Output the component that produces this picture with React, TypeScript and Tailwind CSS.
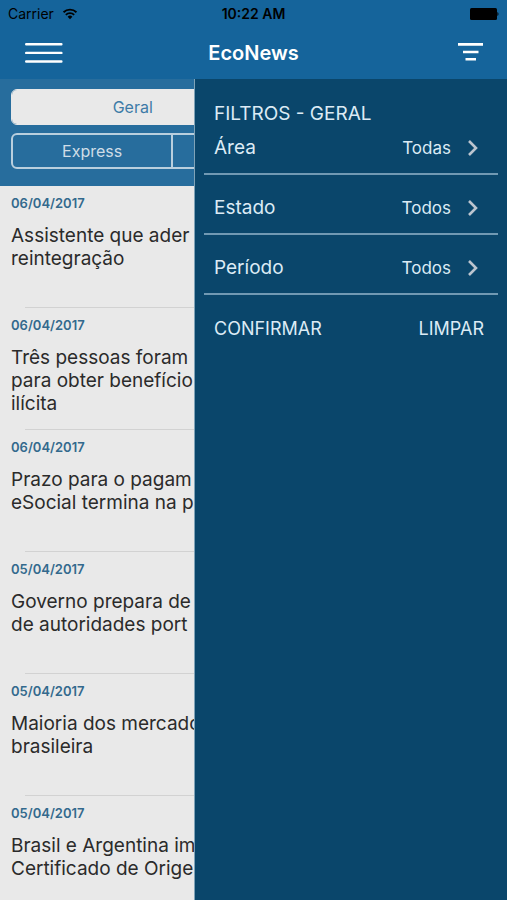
import { useState } from 'react';

interface NewsItem {
  id: number;
  date: string;
  lines: string[];
}

interface Filter {
  label: string;
  value: string;
}

const news: NewsItem[] = [
  { id: 1, date: '06/04/2017', lines: ['Assistente que ader', 'reintegração'] },
  { id: 2, date: '06/04/2017', lines: ['Três pessoas foram', 'para obter benefício', 'ilícita'] },
  { id: 3, date: '06/04/2017', lines: ['Prazo para o pagam', 'eSocial termina na p'] },
  { id: 4, date: '05/04/2017', lines: ['Governo prepara de', 'de autoridades port'] },
  { id: 5, date: '05/04/2017', lines: ['Maioria dos mercado', 'brasileira'] },
  { id: 6, date: '05/04/2017', lines: ['Brasil e Argentina im', 'Certificado de Orige'] },
];

const filters: Filter[] = [
  { label: 'Área', value: 'Todas' },
  { label: 'Estado', value: 'Todos' },
  { label: 'Período', value: 'Todos' },
];

function StatusBar() {
  return (
    <div className="grid h-7 grid-cols-3 items-center px-2 text-sm text-black">
      <div className="flex items-center gap-2">
        <span>Carrier</span>
        <svg width="16" height="12" viewBox="0 0 17 13" fill="none" stroke="currentColor" strokeWidth="2">
          <path d="M1.5 4.6a10 10 0 0 1 14 0" />
          <path d="M4 7.4a6.4 6.4 0 0 1 9 0" />
          <path d="M8.5 12.2 5.9 9.4a3.8 3.8 0 0 1 5.2 0z" fill="currentColor" stroke="none" />
        </svg>
      </div>
      <span className="text-center font-semibold">10:22 AM</span>
      <svg className="justify-self-end" width="30" height="12" viewBox="0 0 30 12" fill="currentColor">
        <rect x="1" width="27" height="12" rx="1.5" />
        <path d="M28.4 4a2.4 2.4 0 0 1 0 4z" />
      </svg>
    </div>
  );
}

function NavBar({ onToggle }: { onToggle: () => void }) {
  return (
    <div className="flex h-[51px] items-center justify-between px-6 pb-[2px]">
      <button type="button" aria-label="Menu" className="w-12 text-white">
        <svg width="40" height="22" viewBox="0 0 40 22" stroke="currentColor" strokeWidth="2.4" strokeLinecap="round">
          <path d="M2.2 2.2h35.2M2.2 10.9h35.2M2.2 19.5h35.2" />
        </svg>
      </button>
      <h1 className="text-xl font-semibold text-white">EcoNews</h1>
      <button type="button" aria-label="Filtros" onClick={onToggle} className="flex w-12 justify-end text-white">
        <svg width="25" height="20" viewBox="0 0 25 20" stroke="currentColor" strokeWidth="2.6">
          <path d="M0 1.4h25M5 9h15.5M7.5 16.2h10.5" />
        </svg>
      </button>
    </div>
  );
}

function Segments() {
  return (
    <div className="flex flex-col gap-2 bg-[#276d9d] px-[11px] pt-[10px] pb-[17px] text-base">
      <div className="grid h-9 grid-cols-2 overflow-hidden rounded-md border border-[#e9e9e9]">
        <button type="button" className="bg-[#e9e9e9] text-[#3d7ba7]">Geral</button>
        <div />
      </div>
      <div className="grid h-9 grid-cols-3 divide-x-2 divide-[#b9cfde] overflow-hidden rounded-md border-2 border-[#b9cfde]">
        <button type="button" className="text-[#cfdde7]">Express</button>
        <div />
        <div />
      </div>
    </div>
  );
}

function NewsList() {
  return (
    <ul>
      {news.map((item) => (
        <li key={item.id}>
          <article className="h-[121px] px-[11px] pt-2">
            <time className="block text-[13px] leading-[18px] font-semibold text-[#33698d]">{item.date}</time>
            <h2 className="pt-3 text-[19px] leading-[23px] whitespace-nowrap text-[#2b2b2b]">
              {item.lines.map((line) => (
                <span key={line} className="block">{line}</span>
              ))}
            </h2>
          </article>
          <hr className="ml-[25px] border-[#d2d2d2]" />
        </li>
      ))}
    </ul>
  );
}

function FilterDrawer() {
  return (
    <aside className="absolute inset-y-0 right-0 w-[313px] border-l border-[#7fa3b8] bg-[#0a466b] px-[9px] pt-[23px] text-[#dcebf5]">
      <h2 className="px-[10px] text-[19px] leading-6">FILTROS - GERAL</h2>
      {filters.map((filter, i) => (
        <button
          key={filter.label}
          type="button"
          className={`flex w-full items-end border-b-2 border-[#7199b3] px-[10px] pb-[14px] leading-[22px] ${i === 0 ? 'h-[49px]' : 'h-[60px]'}`}
        >
          <span className="flex-1 text-left text-[19px]">{filter.label}</span>
          <span className="text-[17px]">{filter.value}</span>
          <svg
            className="mr-2 ml-4 h-[22px] text-[#bcc5cf]"
            width="13"
            height="18"
            viewBox="0 0 13 18"
            fill="none"
            stroke="currentColor"
            strokeWidth="2.6"
          >
            <path d="m2 2 7 7-7 7" />
          </svg>
        </button>
      ))}
      <div className="flex justify-between px-[10px] pt-[22px] pr-[14px] text-lg leading-6">
        <button type="button">CONFIRMAR</button>
        <button type="button">LIMPAR</button>
      </div>
    </aside>
  );
}

export default function App() {
  const [open, setOpen] = useState(true);

  return (
    <div className="flex h-screen flex-col overflow-hidden bg-[#e9e9e9] font-['Inter','Liberation_Sans',sans-serif]">
      <header className="bg-[#15649b]">
        <StatusBar />
        <NavBar onToggle={() => setOpen(!open)} />
      </header>
      <main className="relative flex-1 overflow-hidden">
        <Segments />
        <NewsList />
        {open && <FilterDrawer />}
      </main>
    </div>
  );
}
